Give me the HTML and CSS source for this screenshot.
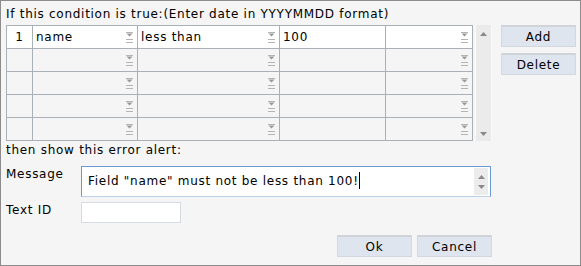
FILE: index.html
```html
<!DOCTYPE html>
<html>

<head>
  <meta charset="UTF-8">
  <title>Validation rule</title>
  <link rel="stylesheet" href="styles.css">
</head>

<body>
  <div class="dialog">
    <div class="title">If this condition is true:(Enter date in YYYYMMDD format)</div>

    <div class="conditions">
      <div class="grid-wrap">
        <table class="grid">
          <colgroup>
            <col width="26">
            <col width="105">
            <col width="142">
            <col width="106">
            <col width="87">
          </colgroup>
          <tbody>
            <tr class="active">
              <td class="num">1</td>
              <td><div class="cell"><span>name</span><svg class="drop" width="7" height="11" viewBox="0 0 7 11"><rect x="0" y="0" width="7" height="1" fill="#b4b4b4"/><path d="M0.5 1.5h6l-3 3z" fill="#999"/><rect x="0" y="7" width="7" height="1" fill="#b4b4b4"/><rect x="0" y="10" width="7" height="1" fill="#b4b4b4"/></svg></div></td>
              <td><div class="cell"><span>less than</span><svg class="drop" width="7" height="11" viewBox="0 0 7 11"><rect x="0" y="0" width="7" height="1" fill="#b4b4b4"/><path d="M0.5 1.5h6l-3 3z" fill="#999"/><rect x="0" y="7" width="7" height="1" fill="#b4b4b4"/><rect x="0" y="10" width="7" height="1" fill="#b4b4b4"/></svg></div></td>
              <td><div class="cell"><span>100</span></div></td>
              <td><div class="cell"><span></span><svg class="drop" width="7" height="11" viewBox="0 0 7 11"><rect x="0" y="0" width="7" height="1" fill="#b4b4b4"/><path d="M0.5 1.5h6l-3 3z" fill="#999"/><rect x="0" y="7" width="7" height="1" fill="#b4b4b4"/><rect x="0" y="10" width="7" height="1" fill="#b4b4b4"/></svg></div></td>
            </tr>
            <tr>
              <td class="num"></td>
              <td><div class="cell"><span></span><svg class="drop" width="7" height="11" viewBox="0 0 7 11"><rect x="0" y="0" width="7" height="1" fill="#b4b4b4"/><path d="M0.5 1.5h6l-3 3z" fill="#999"/><rect x="0" y="7" width="7" height="1" fill="#b4b4b4"/><rect x="0" y="10" width="7" height="1" fill="#b4b4b4"/></svg></div></td>
              <td><div class="cell"><span></span><svg class="drop" width="7" height="11" viewBox="0 0 7 11"><rect x="0" y="0" width="7" height="1" fill="#b4b4b4"/><path d="M0.5 1.5h6l-3 3z" fill="#999"/><rect x="0" y="7" width="7" height="1" fill="#b4b4b4"/><rect x="0" y="10" width="7" height="1" fill="#b4b4b4"/></svg></div></td>
              <td></td>
              <td><div class="cell"><span></span><svg class="drop" width="7" height="11" viewBox="0 0 7 11"><rect x="0" y="0" width="7" height="1" fill="#b4b4b4"/><path d="M0.5 1.5h6l-3 3z" fill="#999"/><rect x="0" y="7" width="7" height="1" fill="#b4b4b4"/><rect x="0" y="10" width="7" height="1" fill="#b4b4b4"/></svg></div></td>
            </tr>
            <tr>
              <td class="num"></td>
              <td><div class="cell"><span></span><svg class="drop" width="7" height="11" viewBox="0 0 7 11"><rect x="0" y="0" width="7" height="1" fill="#b4b4b4"/><path d="M0.5 1.5h6l-3 3z" fill="#999"/><rect x="0" y="7" width="7" height="1" fill="#b4b4b4"/><rect x="0" y="10" width="7" height="1" fill="#b4b4b4"/></svg></div></td>
              <td><div class="cell"><span></span><svg class="drop" width="7" height="11" viewBox="0 0 7 11"><rect x="0" y="0" width="7" height="1" fill="#b4b4b4"/><path d="M0.5 1.5h6l-3 3z" fill="#999"/><rect x="0" y="7" width="7" height="1" fill="#b4b4b4"/><rect x="0" y="10" width="7" height="1" fill="#b4b4b4"/></svg></div></td>
              <td></td>
              <td><div class="cell"><span></span><svg class="drop" width="7" height="11" viewBox="0 0 7 11"><rect x="0" y="0" width="7" height="1" fill="#b4b4b4"/><path d="M0.5 1.5h6l-3 3z" fill="#999"/><rect x="0" y="7" width="7" height="1" fill="#b4b4b4"/><rect x="0" y="10" width="7" height="1" fill="#b4b4b4"/></svg></div></td>
            </tr>
            <tr>
              <td class="num"></td>
              <td><div class="cell"><span></span><svg class="drop" width="7" height="11" viewBox="0 0 7 11"><rect x="0" y="0" width="7" height="1" fill="#b4b4b4"/><path d="M0.5 1.5h6l-3 3z" fill="#999"/><rect x="0" y="7" width="7" height="1" fill="#b4b4b4"/><rect x="0" y="10" width="7" height="1" fill="#b4b4b4"/></svg></div></td>
              <td><div class="cell"><span></span><svg class="drop" width="7" height="11" viewBox="0 0 7 11"><rect x="0" y="0" width="7" height="1" fill="#b4b4b4"/><path d="M0.5 1.5h6l-3 3z" fill="#999"/><rect x="0" y="7" width="7" height="1" fill="#b4b4b4"/><rect x="0" y="10" width="7" height="1" fill="#b4b4b4"/></svg></div></td>
              <td></td>
              <td><div class="cell"><span></span><svg class="drop" width="7" height="11" viewBox="0 0 7 11"><rect x="0" y="0" width="7" height="1" fill="#b4b4b4"/><path d="M0.5 1.5h6l-3 3z" fill="#999"/><rect x="0" y="7" width="7" height="1" fill="#b4b4b4"/><rect x="0" y="10" width="7" height="1" fill="#b4b4b4"/></svg></div></td>
            </tr>
            <tr>
              <td class="num"></td>
              <td><div class="cell"><span></span><svg class="drop" width="7" height="11" viewBox="0 0 7 11"><rect x="0" y="0" width="7" height="1" fill="#b4b4b4"/><path d="M0.5 1.5h6l-3 3z" fill="#999"/><rect x="0" y="7" width="7" height="1" fill="#b4b4b4"/><rect x="0" y="10" width="7" height="1" fill="#b4b4b4"/></svg></div></td>
              <td><div class="cell"><span></span><svg class="drop" width="7" height="11" viewBox="0 0 7 11"><rect x="0" y="0" width="7" height="1" fill="#b4b4b4"/><path d="M0.5 1.5h6l-3 3z" fill="#999"/><rect x="0" y="7" width="7" height="1" fill="#b4b4b4"/><rect x="0" y="10" width="7" height="1" fill="#b4b4b4"/></svg></div></td>
              <td></td>
              <td><div class="cell"><span></span><svg class="drop" width="7" height="11" viewBox="0 0 7 11"><rect x="0" y="0" width="7" height="1" fill="#b4b4b4"/><path d="M0.5 1.5h6l-3 3z" fill="#999"/><rect x="0" y="7" width="7" height="1" fill="#b4b4b4"/><rect x="0" y="10" width="7" height="1" fill="#b4b4b4"/></svg></div></td>
            </tr>
          </tbody>
        </table>
        <div class="vscroll">
          <svg width="7" height="4" viewBox="0 0 7 4"><path d="M0 4h7l-3.5-4z" fill="#8a8a8a"/></svg>
          <svg width="7" height="4" viewBox="0 0 7 4"><path d="M0 0h7l-3.5 4z" fill="#8a8a8a"/></svg>
        </div>
      </div>
      <div class="side-buttons">
        <button class="btn">Add</button>
        <button class="btn">Delete</button>
      </div>
    </div>

    <div class="section">then show this error alert:</div>

    <div class="field">
      <div class="label">Message</div>
      <div class="message">
        <div class="message-text">Field "name" must not be less than 100!<span class="caret"></span></div>
        <div class="mini-scroll">
          <svg width="7" height="4" viewBox="0 0 7 4"><path d="M0 4h7l-3.5-4z" fill="#8a8a8a"/></svg>
          <svg width="7" height="4" viewBox="0 0 7 4"><path d="M0 0h7l-3.5 4z" fill="#8a8a8a"/></svg>
        </div>
      </div>
    </div>

    <div class="field">
      <div class="label">Text ID</div>
      <div class="text-id"></div>
    </div>

    <div class="actions">
      <button class="btn">Ok</button>
      <button class="btn">Cancel</button>
    </div>
  </div>
</body>

</html>
```

FILE: styles.css
```css
body {
  margin: 0;
  font-family: "DejaVu Sans", Verdana, sans-serif;
  font-size: 12px;
  letter-spacing: 0.72px;
  color: #000;
}

.dialog {
  width: 581px;
  height: 266px;
  box-sizing: border-box;
  border: 1px solid #8c8c8c;
  background: #f5f5f5;
  padding-left: 5px;
}

.title {
  line-height: 15px;
  padding: 6px 0 3px 0;
}

.conditions {
  display: flex;
  align-items: flex-start;
}

.grid-wrap {
  display: flex;
}

.grid {
  border-collapse: collapse;
  table-layout: fixed;
  width: 467px;
}

.grid td {
  border: 1px solid #a9b0b8;
  height: 23px;
  padding: 0;
  box-sizing: border-box;
}

.grid .active td {
  background: #fff;
}

.grid .num {
  text-align: center;
}

.cell {
  display: flex;
  align-items: center;
  justify-content: space-between;
  padding: 0 4px 0 3px;
}

.drop {
  display: block;
  margin-top: 1px;
}

.vscroll {
  width: 15px;
  margin-left: 2px;
  background: #ebebeb;
  border-left: 1px solid #fafafa;
  border-right: 1px solid #fafafa;
  display: flex;
  flex-direction: column;
  justify-content: space-between;
  align-items: center;
  padding: 7px 0 5px 0;
}

.side-buttons {
  display: flex;
  flex-direction: column;
  gap: 6px;
  margin-left: 9px;
}

.btn {
  width: 75px;
  height: 22px;
  padding: 0;
  font-family: inherit;
  font-size: 12px;
  letter-spacing: 0.72px;
  color: #000;
  background: #dfe5ee;
  border: 1px solid #d3d8de;
  border-top: 2px solid #d0d4d9;
}

.section {
  line-height: 15px;
  margin-top: 2px;
}

.field {
  display: flex;
  margin-top: 8px;
}

.label {
  width: 75px;
  line-height: 15px;
  padding-top: 1px;
}

.message {
  width: 410px;
  height: 31px;
  box-sizing: border-box;
  background: #fff;
  border: 1px solid #6a9ad3;
  border-bottom-color: #bcd0e6;
  display: flex;
  justify-content: space-between;
}

.message-text {
  padding: 5px 0 0 6px;
  line-height: 15px;
}

.caret {
  display: inline-block;
  width: 1px;
  height: 17px;
  background: #000;
  vertical-align: -4px;
  margin-left: 0;
}

.mini-scroll {
  width: 14px;
  margin: 1px 2px 1px 0;
  background: #ececec;
  display: flex;
  flex-direction: column;
  justify-content: space-between;
  align-items: center;
  padding: 7px 0 6px 0;
}

.text-id {
  width: 100px;
  height: 21px;
  box-sizing: border-box;
  background: #fff;
  border: 1px solid #d6dbe1;
}

.field + .field {
  margin-top: 5px;
}

.actions {
  display: flex;
  justify-content: flex-end;
  gap: 5px;
  width: 486px;
  margin-top: 12px;
}
```
